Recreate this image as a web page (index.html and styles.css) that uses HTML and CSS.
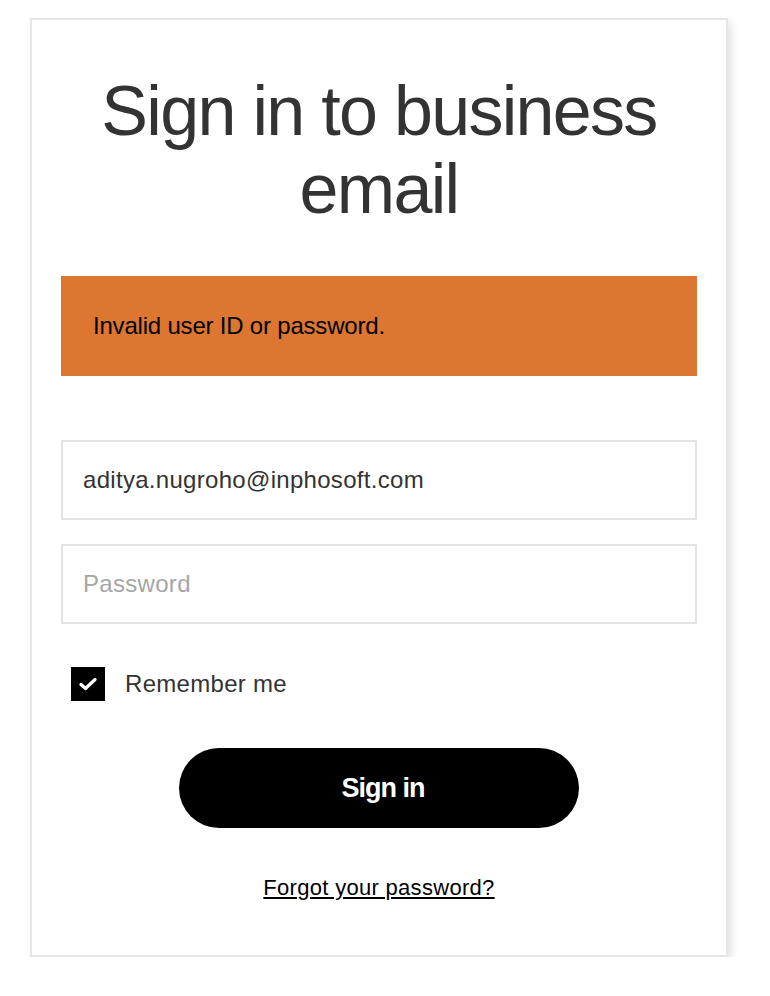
FILE: index.html
```html
<!DOCTYPE html>
<html lang="en">
<head>
    <meta charset="UTF-8">
    <meta name="viewport" content="width=device-width, initial-scale=1.0">
    <title>Sign in</title>
    <link rel="stylesheet" href="styles.css">
</head>
<body>
    <div class="card">
        <h1>Sign in to business email</h1>
        <div class="alert">Invalid user ID or password.</div>
        <form class="login-form">
            <input type="text" class="field" name="email" value="aditya.nugroho@inphosoft.com">
            <input type="password" class="field" name="password" placeholder="Password">
            <label class="remember">
                <span class="checkbox">
                    <svg width="18" height="14" viewBox="0 0 18 14">
                        <path d="M2 7.5 L6.5 11.5 L16 2.5" fill="none" stroke="#fff" stroke-width="3.2" stroke-linecap="round" stroke-linejoin="round"/>
                    </svg>
                </span>
                Remember me
            </label>
            <button type="submit" class="btn-signin">Sign in</button>
        </form>
        <a href="#" class="forgot">Forgot your password?</a>
    </div>
</body>
</html>
```

FILE: styles.css
```css
body {
    font-family: "Liberation Sans", Arial, sans-serif;
    margin: 0;
    padding: 18px 0 0 30px;
    background-color: #fff;
}

.card {
    width: 636px;
    padding: 52px 29px 54px;
    border: 2px solid #e6e6e6;
    background-color: #fff;
    box-shadow: 3px 4px 8px rgba(0, 0, 0, 0.12);
    display: flex;
    flex-direction: column;
}

h1 {
    margin: 0 10px;
    font-size: 70px;
    font-weight: normal;
    line-height: 78px;
    letter-spacing: -1.7px;
    text-align: center;
    color: #333;
}

.alert {
    margin-top: 48px;
    height: 100px;
    padding: 0 32px;
    display: flex;
    align-items: center;
    background-color: #dd7630;
    color: #000;
    font-size: 24px;
    letter-spacing: -0.2px;
}

.login-form {
    margin-top: 64px;
    display: flex;
    flex-direction: column;
}

.field {
    box-sizing: border-box;
    height: 80px;
    width: 100%;
    margin: 0 0 24px;
    padding: 0 20px;
    border: 2px solid #e3e3e3;
    border-radius: 0;
    font-family: inherit;
    font-size: 24px;
    letter-spacing: 0.3px;
    color: #333;
    outline: none;
}

.field::placeholder {
    color: #a6a6a6;
}

.remember {
    display: flex;
    align-items: center;
    gap: 20px;
    margin: 19px 0 0 10px;
    font-size: 24px;
    letter-spacing: 0.3px;
    color: #333;
}

.checkbox {
    width: 34px;
    height: 34px;
    background-color: #000;
    display: flex;
    align-items: center;
    justify-content: center;
}

.btn-signin {
    align-self: center;
    width: 400px;
    height: 80px;
    margin-top: 47px;
    padding: 0 0 0 8px;
    border: none;
    border-radius: 40px;
    background-color: #000;
    color: #fff;
    font-family: inherit;
    font-size: 27px;
    font-weight: bold;
    letter-spacing: -1px;
    cursor: pointer;
}

.forgot {
    align-self: center;
    margin-top: 47px;
    font-size: 22px;
    letter-spacing: 0.3px;
    color: #000;
    text-decoration: underline;
}
```
